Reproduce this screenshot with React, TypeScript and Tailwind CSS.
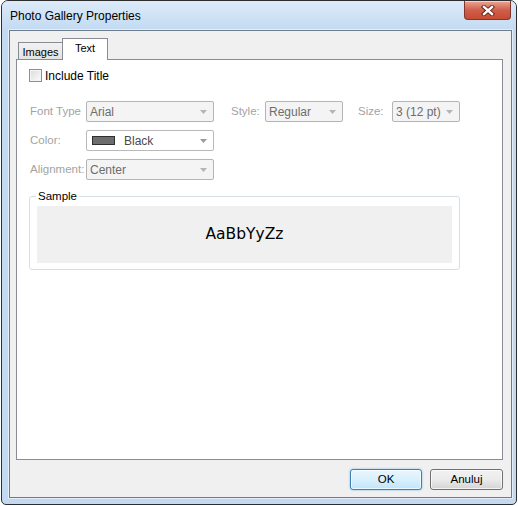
import { useState } from "react";

const ui = { fontFamily: '"Liberation Sans", Arial, sans-serif' };

function Arrow({ color = "#a7a7a7" }: { color?: string }) {
  return (
    <svg width="7" height="4" viewBox="0 0 7 4" className="shrink-0">
      <path d="M0 0h7L3.5 4z" fill={color} />
    </svg>
  );
}

function Combo({
  value,
  width,
  disabled = true,
  swatch = false,
}: {
  value: string;
  width: string;
  disabled?: boolean;
  swatch?: boolean;
}) {
  return (
    <div
      className={`flex h-[21px] ${width} items-center rounded-[2px] border pr-[6px] ${
        disabled ? "border-[#b3b5b8] bg-[#f4f4f4] pl-[3px] text-[#6d6d6d]" : "border-[#b9b9b9] bg-white pl-[5px] text-[#4a4a4a]"
      }`}
    >
      {swatch && <span className="mr-[9px] h-[9px] w-[23px] border border-[#2f2f2f] bg-[#6d6d6d]" />}
      <span className="flex-1 text-[12px] leading-none">{value}</span>
      <Arrow color={disabled ? "#b4b4b4" : "#9a9a9a"} />
    </div>
  );
}

export default function App() {
  const [checked, setChecked] = useState(false);

  return (
    <div className="h-[506px] w-[518px] bg-white" style={ui}>
      <div className="ml-[1px] flex h-[505px] w-[516px] flex-col rounded-t-[7px] rounded-b-[5px] border border-[#2e2e2e] bg-[#c2d9f1]">
        {/* title bar */}
        <div className="flex h-[29px] items-start rounded-t-[6px] bg-gradient-to-b from-[#dcebf9] to-[#c3daf2] pl-[8px]">
          <span className="mt-[9px] text-[12px] leading-none text-black">Photo Gallery Properties</span>
          <button
            type="button"
            className="ml-auto mr-[5px] flex h-[19px] w-[47px] items-center justify-center rounded-b-[4px] border border-t-0 border-[#80362a] bg-gradient-to-b from-[#e9a797] via-[#cf5f4b] to-[#c84a32] shadow-[inset_0_1px_0_rgba(255,255,255,0.5)]"
          >
            <svg width="14" height="11" viewBox="0 0 14 11">
              <path d="M3 2l8 7M11 2l-8 7" stroke="#5a1d14" strokeWidth="4.2" strokeLinecap="square" />
              <path d="M3 2l8 7M11 2l-8 7" stroke="#ffffff" strokeWidth="2.4" strokeLinecap="square" />
            </svg>
          </button>
        </div>

        {/* client area */}
        <div className="ml-[7px] mr-[4px] flex h-[468px] flex-col border border-[#6d7c8c] bg-[#f0f0f0] pl-[6px] pr-[8px] pt-[7px] shadow-[0_0_0_1px_rgba(255,255,255,0.55)]">
          {/* tabs */}
          <div className="flex h-[21px] items-end pl-[2px] text-[11px] leading-none">
            <div className="flex h-[17px] w-[45px] items-center justify-center border border-b-0 border-[#898c95] bg-gradient-to-b from-[#f2f2f2] to-[#e3e3e3] pt-[2px] text-black">
              Images
            </div>
            <div className="relative z-10 -mb-px -ml-px flex h-[22px] w-[46px] items-start justify-center border border-b-0 border-[#898c95] bg-white pt-[4px] text-black">
              Text
            </div>
          </div>

          {/* tab panel */}
          <div className="h-[401px] border border-[#898c95] bg-white pl-[13px] pt-[9px] text-[11px]">
            <label className="flex h-[13px] items-center gap-[3px] text-black">
              <span
                onClick={() => setChecked(!checked)}
                className="-ml-px flex h-[13px] w-[13px] items-center justify-center border border-[#8f8f8f] bg-gradient-to-br from-[#dcdcdc] to-[#fbfbfb] shadow-[inset_0_0_0_1px_#f4f4f4]"
              >
                {checked && <span className="text-[10px] leading-none">✓</span>}
              </span>
              <span className="text-[12px] leading-none">Include Title</span>
            </label>

            <div className="mt-[19px] flex flex-col gap-[8px] text-[12px]">
              <div className="flex items-center">
                <span className="w-[56px] text-[11.5px] text-[#a3a3a3]">Font Type</span>
                <Combo value="Arial" width="w-[128px]" />
                <span className="ml-[17px] w-[34px] text-[11.5px] text-[#a3a3a3]">Style:</span>
                <Combo value="Regular" width="w-[78px]" />
                <span className="ml-[15px] w-[34px] text-[11.5px] text-[#a3a3a3]">Size:</span>
                <Combo value="3 (12 pt)" width="w-[68px]" />
              </div>
              <div className="flex items-center">
                <span className="w-[56px] text-[11.5px] text-[#a3a3a3]">Color:</span>
                <Combo value="Black" width="w-[128px]" disabled={false} swatch />
              </div>
              <div className="flex items-center">
                <span className="w-[56px] text-[11.5px] text-[#a3a3a3]">Alignment:</span>
                <Combo value="Center" width="w-[128px]" />
              </div>
            </div>

            {/* sample group */}
            <div className="relative -ml-px mt-[16px] h-[74px] w-[431px] rounded-[3px] border border-[#d5dfe5] px-[7px] pb-[6px] pt-[9px]">
              <span className="absolute left-[6px] top-[-6px] bg-white px-[2px] text-[11.5px] leading-none text-black">Sample</span>
              <div className="flex h-[57px] items-center justify-center bg-[#f0f0f0]">
                <span className="text-[15.5px] text-black" style={{ fontFamily: '"DejaVu Sans", sans-serif' }}>
                  AaBbYyZz
                </span>
              </div>
            </div>
          </div>

          {/* buttons */}
          <div className="mt-[9px] flex justify-end gap-[8px] text-[11.5px]">
            <button
              type="button"
              className="h-[21px] w-[72px] rounded-[3px] border border-[#3c7fb1] bg-gradient-to-b from-[#eaf6fd] via-[#d9f0fc] to-[#bee6fd] leading-none text-black shadow-[inset_0_0_0_1px_rgba(255,255,255,0.7),0_0_2px_#5fb3e8]"
            >
              OK
            </button>
            <button
              type="button"
              className="h-[21px] w-[73px] rounded-[3px] border border-[#707070] bg-gradient-to-b from-[#f2f2f2] via-[#ebebeb] to-[#d4d4d4] leading-none text-black shadow-[inset_0_0_0_1px_rgba(255,255,255,0.7)]"
            >
              Anuluj
            </button>
          </div>
        </div>
      </div>
    </div>
  );
}
